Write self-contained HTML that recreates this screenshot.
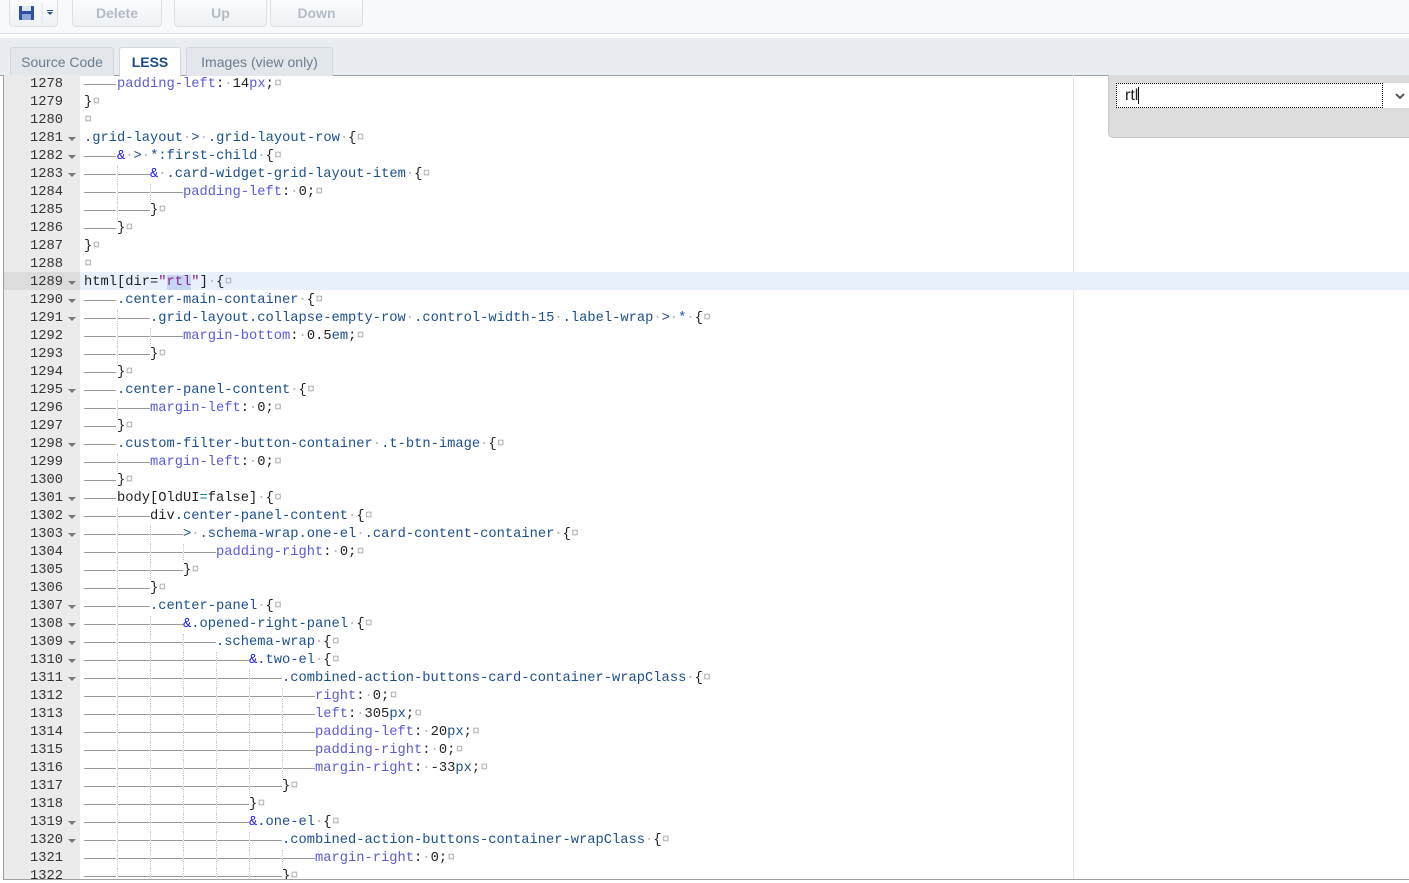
<!DOCTYPE html>
<html><head><meta charset="utf-8"><style>
*{box-sizing:border-box;margin:0;padding:0}
body{width:1409px;height:883px;overflow:hidden;background:#fff;font-family:"Liberation Sans",sans-serif;position:relative}
.tb{position:absolute;left:0;top:0;width:1409px;height:34px;background:#f8f9fb;border-bottom:1px solid #dde1e6}
.btn{position:absolute;top:0;height:27px;border:1px solid #dde1e6;border-top:none;border-radius:0 0 4px 4px;background:linear-gradient(#fbfcfd,#eef1f4);color:#b3bcc6;font-weight:bold;font-size:14px;text-align:center;line-height:26px}
.tabs{position:absolute;left:0;top:38px;width:1409px;height:38px;background:#e9edf1;border-bottom:1px solid #9aa3ab}
.tab{position:absolute;top:9px;height:29px;border:1px solid #d3d8de;border-bottom:none;border-radius:3px 3px 0 0;background:#e3e7ec;color:#6b7c8c;font-size:14px;text-align:center;line-height:28px}
.ed{position:absolute;left:3px;top:75px;width:1406px;height:805px;border-left:1px solid #a0a0a0;border-bottom:1px solid #a0a0a0;overflow:hidden}
.gut{position:absolute;left:0;top:0;width:76px;height:100%;background:#ebebeb}
.ln{position:absolute;left:0;width:76px;height:18px;font:13.75px/18px "Liberation Mono",monospace;color:#333}
.ln b{position:absolute;right:17px;font-weight:normal}
.ln i{position:absolute;left:64px;top:7px;border-left:4px solid transparent;border-right:4px solid transparent;border-top:4px solid #777}
.cl{position:absolute;left:80px;width:1400px;height:18px;font:13.75px/18px "Liberation Mono",monospace;color:#222;white-space:pre}
.t{display:inline-block;width:33px;height:18px;vertical-align:top;background:linear-gradient(#999,#999) no-repeat 0 8px/32px 1px}
.t+.t{border-left:1px dotted #ccc}
.s{color:#1c4f8e}.p{color:#5b5bd8}.a{color:#1515ff}.g{color:#b5b5b5}.q{color:#8a1f8a}.e{color:#0d8a8a}
.rm{position:absolute;left:1069px;top:0;width:1px;height:100%;background:#e4e4e4}
</style></head><body>
<div class="tb">
<div class="btn" style="left:9px;width:49px"><svg width="49" height="26" viewBox="0 0 49 26"><rect x="9" y="6" width="15" height="14" rx="1" fill="#2b4f9e"/><rect x="12" y="6" width="9" height="5" fill="#dfe7f5"/><rect x="12" y="14" width="9" height="6" fill="#8fa7d6"/><line x1="32" y1="3" x2="32" y2="23" stroke="#dde1e6"/><path d="M37 12h6l-3 3z" fill="#2b4f9e"/><rect x="37" y="10" width="6" height="1" fill="#2b4f9e"/></svg></div>
<div class="btn" style="left:72px;width:90px">Delete</div>
<div class="btn" style="left:174px;width:93px">Up</div>
<div class="btn" style="left:270px;width:93px">Down</div>
</div>
<div class="tabs">
<div class="tab" style="left:10px;width:104px">Source Code</div>
<div class="tab" style="left:119px;width:62px;background:#fff;color:#1a4a86;font-weight:bold;height:30px">LESS</div>
<div class="tab" style="left:186px;width:147px">Images (view only)</div>
</div>
<div class="ed">
<div class="gut"></div>
<div class="rm"></div>
<div style="position:absolute;left:0;top:197px;width:1406px;height:18px;background:#e8f0fb"></div>
<div style="position:absolute;left:0;top:197px;width:76px;height:18px;background:#dcdcdc"></div>
<div id="c"></div>
<div style="position:absolute;left:1104px;top:0;width:310px;height:63px;background:#dcdcdc;border:1px solid #c8c8c8;border-top:none;border-radius:0 0 0 5px">
<div style="position:absolute;left:7px;top:8px;width:267px;height:25px;background:#fff;border:1px dotted #000;font:16px/23px 'Liberation Sans',sans-serif;padding-left:8px;color:#222">rt<span style="border-right:1px solid #000">l</span></div>
<div style="position:absolute;left:274px;top:8px;width:40px;height:25px;background:#fff"><svg width="30" height="25"><path d="M13 11l4 4 4-4" stroke="#555" stroke-width="2" fill="none"/></svg></div>
</div>
</div>
<script>
var L=[
[1278,0,1,'<span class="p">padding-left</span>:<span class="g">·</span>14<span class="p">px</span>;<span class="g">¤</span>'],
[1279,0,0,'}<span class="g">¤</span>'],
[1280,0,0,'<span class="g">¤</span>'],
[1281,1,0,'<span class="s">.grid-layout</span><span class="g">·</span><span class="s">&gt;</span><span class="g">·</span><span class="s">.grid-layout-row</span><span class="g">·</span>{<span class="g">¤</span>'],
[1282,1,1,'<span class="a">&amp;</span><span class="g">·</span><span class="s">&gt;</span><span class="g">·</span><span class="s">*:first-child</span><span class="g">·</span>{<span class="g">¤</span>'],
[1283,1,2,'<span class="a">&amp;</span><span class="g">·</span><span class="s">.card-widget-grid-layout-item</span><span class="g">·</span>{<span class="g">¤</span>'],
[1284,0,3,'<span class="p">padding-left</span>:<span class="g">·</span>0;<span class="g">¤</span>'],
[1285,0,2,'}<span class="g">¤</span>'],
[1286,0,1,'}<span class="g">¤</span>'],
[1287,0,0,'}<span class="g">¤</span>'],
[1288,0,0,'<span class="g">¤</span>'],
[1289,1,0,'html[dir=<span class="q">"<span style="background:#c6d6f2">rtl</span>"</span>]<span class="g">·</span>{<span class="g">¤</span>'],
[1290,1,1,'<span class="s">.center-main-container</span><span class="g">·</span>{<span class="g">¤</span>'],
[1291,1,2,'<span class="s">.grid-layout.collapse-empty-row</span><span class="g">·</span><span class="s">.control-width-15</span><span class="g">·</span><span class="s">.label-wrap</span><span class="g">·</span><span class="s">&gt;</span><span class="g">·</span><span class="s">*</span><span class="g">·</span>{<span class="g">¤</span>'],
[1292,0,3,'<span class="p">margin-bottom</span>:<span class="g">·</span>0.5<span class="s">em</span>;<span class="g">¤</span>'],
[1293,0,2,'}<span class="g">¤</span>'],
[1294,0,1,'}<span class="g">¤</span>'],
[1295,1,1,'<span class="s">.center-panel-content</span><span class="g">·</span>{<span class="g">¤</span>'],
[1296,0,2,'<span class="p">margin-left</span>:<span class="g">·</span>0;<span class="g">¤</span>'],
[1297,0,1,'}<span class="g">¤</span>'],
[1298,1,1,'<span class="s">.custom-filter-button-container</span><span class="g">·</span><span class="s">.t-btn-image</span><span class="g">·</span>{<span class="g">¤</span>'],
[1299,0,2,'<span class="p">margin-left</span>:<span class="g">·</span>0;<span class="g">¤</span>'],
[1300,0,1,'}<span class="g">¤</span>'],
[1301,1,1,'body[OldUI<span class="e">=</span>false]<span class="g">·</span>{<span class="g">¤</span>'],
[1302,1,2,'div<span class="s">.center-panel-content</span><span class="g">·</span>{<span class="g">¤</span>'],
[1303,1,3,'<span class="s">&gt;</span><span class="g">·</span><span class="s">.schema-wrap.one-el</span><span class="g">·</span><span class="s">.card-content-container</span><span class="g">·</span>{<span class="g">¤</span>'],
[1304,0,4,'<span class="p">padding-right</span>:<span class="g">·</span>0;<span class="g">¤</span>'],
[1305,0,3,'}<span class="g">¤</span>'],
[1306,0,2,'}<span class="g">¤</span>'],
[1307,1,2,'<span class="s">.center-panel</span><span class="g">·</span>{<span class="g">¤</span>'],
[1308,1,3,'<span class="a">&amp;</span><span class="s">.opened-right-panel</span><span class="g">·</span>{<span class="g">¤</span>'],
[1309,1,4,'<span class="s">.schema-wrap</span><span class="g">·</span>{<span class="g">¤</span>'],
[1310,1,5,'<span class="a">&amp;</span><span class="s">.two-el</span><span class="g">·</span>{<span class="g">¤</span>'],
[1311,1,6,'<span class="s">.combined-action-buttons-card-container-wrapClass</span><span class="g">·</span>{<span class="g">¤</span>'],
[1312,0,7,'<span class="p">right</span>:<span class="g">·</span>0;<span class="g">¤</span>'],
[1313,0,7,'<span class="p">left</span>:<span class="g">·</span>305<span class="s">px</span>;<span class="g">¤</span>'],
[1314,0,7,'<span class="p">padding-left</span>:<span class="g">·</span>20<span class="s">px</span>;<span class="g">¤</span>'],
[1315,0,7,'<span class="p">padding-right</span>:<span class="g">·</span>0;<span class="g">¤</span>'],
[1316,0,7,'<span class="p">margin-right</span>:<span class="g">·</span>-33<span class="s">px</span>;<span class="g">¤</span>'],
[1317,0,6,'}<span class="g">¤</span>'],
[1318,0,5,'}<span class="g">¤</span>'],
[1319,1,5,'<span class="a">&amp;</span><span class="s">.one-el</span><span class="g">·</span>{<span class="g">¤</span>'],
[1320,1,6,'<span class="s">.combined-action-buttons-container-wrapClass</span><span class="g">·</span>{<span class="g">¤</span>'],
[1321,0,7,'<span class="p">margin-right</span>:<span class="g">·</span>0;<span class="g">¤</span>'],
[1322,0,6,'}<span class="g">¤</span>']];
var h='';
L.forEach(function(l,i){var y=i*18-1;
h+='<div class="ln" style="top:'+(y+2)+'px"><b>'+l[0]+'</b>'+(l[1]?'<i></i>':'')+'</div>';
h+='<div class="cl" style="top:'+(y+2)+'px">'+'<span class="t"></span>'.repeat(l[2])+l[3]+'</div>';});
document.getElementById('c').innerHTML=h;
</script>
</body></html>
